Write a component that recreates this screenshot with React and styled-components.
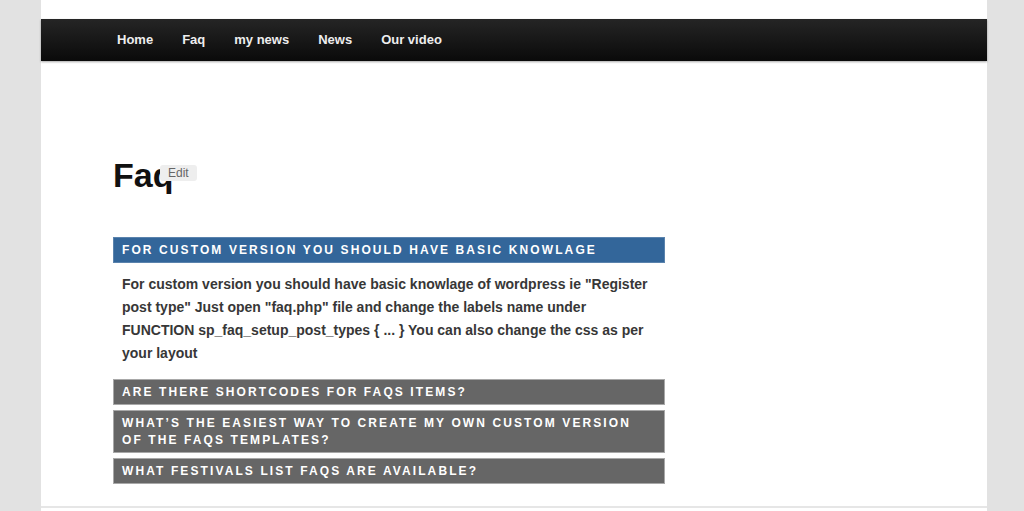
import React from "react";
import styled, { createGlobalStyle } from "styled-components";

const Global = createGlobalStyle`
  html, body { margin: 0; padding: 0; }
  body {
    background: #e2e2e2;
    font-family: "Liberation Sans", Arial, Helvetica, sans-serif;
    height: 511px;
    overflow: hidden;
  }
`;

const Page = styled.div`
  width: 946px;
  margin-left: 41px;
  background: #fff;
  padding-top: 19px;
  min-height: 492px;
`;

const NavBar = styled.nav`
  height: 42px;
  background: linear-gradient(#252525, #0a0a0a);
  box-shadow: 0 1px 2px rgba(0, 0, 0, 0.35);
  display: flex;
  align-items: center;
  padding-left: 61.5px;
`;

const NavLink = styled.a`
  color: #eeeeee;
  font-size: 13px;
  font-weight: bold;
  padding: 0 14.5px;
  line-height: 42px;
  text-decoration: none;
  cursor: pointer;
`;

const Main = styled.main`
  padding: 97px 0 0 72px;
`;

const Title = styled.h1`
  position: relative;
  margin: 0;
  font-size: 34px;
  line-height: 34px;
  font-weight: bold;
  color: #111;
  display: inline-block;
`;

const EditBadge = styled.span`
  position: absolute;
  left: 47px;
  top: 7px;
  background: #eeeeee;
  color: #666;
  font-size: 12px;
  font-weight: normal;
  line-height: 16px;
  padding: 0 8px;
  border-radius: 3px;
`;

const FaqList = styled.div`
  width: 552px;
  margin-top: 45px;
  display: flex;
  flex-direction: column;
`;

const FaqHead = styled.div`
  background: ${(p) => (p.$open ? "#33669a" : "#666666")};
  border: 1px solid ${(p) => (p.$open ? "#5a83ad" : "#a8a8a8")};
  color: #fff;
  font-size: 12px;
  font-weight: bold;
  letter-spacing: 2.1px;
  line-height: 17px;
  text-transform: uppercase;
  padding: 4px 24px 3px 8px;
  margin-bottom: ${(p) => (p.$open ? "0" : "5px")};
`;

const FaqBody = styled.div`
  padding: 10px 9px 14px 9px;
  font-size: 14px;
  font-weight: bold;
  line-height: 23px;
  color: #373737;
`;

const Footer = styled.div`
  border-top: 2px solid #e6e6e6;
  margin-top: 17px;
  height: 6px;
`;

const faqs = [
  {
    q: "For custom version you should have basic knowlage",
    a: 'For custom version you should have basic knowlage of wordpress ie "Register post type" Just open "faq.php" file and change the labels name under FUNCTION sp_faq_setup_post_types { ... } You can also change the css as per your layout',
    open: true,
  },
  { q: "Are there shortcodes for FAQs items?" },
  { q: "What’s the easiest way to create my own custom version of the FAQs templates?" },
  { q: "What festivals list FAQs are available?" },
];

export default function App() {
  return (
    <>
      <Global />
      <Page>
        <NavBar>
          {["Home", "Faq", "my news", "News", "Our video"].map((t) => (
            <NavLink key={t}>{t}</NavLink>
          ))}
        </NavBar>
        <Main>
          <Title>
            Faq<EditBadge>Edit</EditBadge>
          </Title>
          <FaqList>
            {faqs.map((f) => (
              <React.Fragment key={f.q}>
                <FaqHead $open={f.open}>{f.q}</FaqHead>
                {f.open && <FaqBody>{f.a}</FaqBody>}
              </React.Fragment>
            ))}
          </FaqList>
        </Main>
        <Footer />
      </Page>
    </>
  );
}
